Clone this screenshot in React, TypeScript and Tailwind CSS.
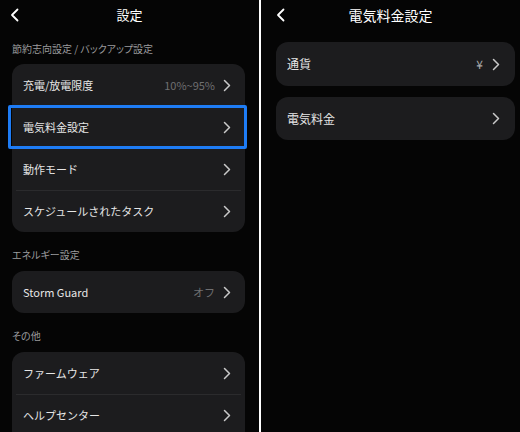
import React from "react";

const font = { fontFamily: '"Noto Sans CJK JP", "Noto Sans", sans-serif' };

function Chevron() {
  return (
    <svg width="8" height="13" viewBox="0 0 8 13" className="shrink-0">
      <polyline points="1.5,1.5 6.5,6.5 1.5,11.5" fill="none" stroke="#c9c9c9" strokeWidth="1.5" strokeLinecap="round" strokeLinejoin="round" />
    </svg>
  );
}

function Back() {
  return (
    <svg width="9" height="14" viewBox="0 0 9 14">
      <polyline points="7.5,1.5 2,7 7.5,12.5" fill="none" stroke="#ffffff" strokeWidth="1.8" strokeLinecap="round" strokeLinejoin="round" />
    </svg>
  );
}

function Row({ label, value, divider, highlight }: { label: string; value?: string; divider?: boolean; highlight?: boolean }) {
  return (
    <div className="relative h-[42px] flex items-center pl-[11px] pr-[14px]">
      {divider && <div className="absolute top-0 left-[4px] right-[4px] h-px bg-[#2b2b2d]" />}
      <span className="flex-1 text-[11px] text-[#e6e6e6]">{label}</span>
      {value && <span className="text-[11px] text-[#6f6f71] mr-[8px]">{value}</span>}
      <Chevron />
      {highlight && (
        <div className="absolute -top-[1px] -bottom-[1px] -left-[4px] -right-[2px] border-[3px] border-[#1e7cf5] rounded-[2px]" />
      )}
    </div>
  );
}

export default function App() {
  return (
    <div className="flex w-[520px] h-[432px] overflow-hidden bg-black" style={font}>
      <div className="w-[259px] h-full bg-[#050505]">
        <div className="relative h-[30px] flex items-center justify-center">
          <div className="absolute left-[10px] top-[8px]"><Back /></div>
          <span className="text-[13px] text-white">設定</span>
        </div>
        <div className="pt-[12px] pb-[8px] pl-[12px] text-[10px] leading-[14px] text-[#9b9b9d] [font-feature-settings:'palt']">節約志向設定 / バックアップ設定</div>
        <div className="ml-[12px] w-[233px] rounded-[12px] bg-[#1c1c1e]">
          <Row label="充電/放電限度" value="10%~95%" />
          <Row label="電気料金設定" highlight />
          <Row label="動作モード" />
          <Row label="スケジュールされたタスク" divider />
        </div>
        <div className="pt-[16px] pb-[9px] pl-[12px] text-[10px] leading-[14px] text-[#9b9b9d] [font-feature-settings:'palt']">エネルギー設定</div>
        <div className="ml-[12px] w-[233px] rounded-[12px] bg-[#1c1c1e]">
          <Row label="Storm Guard" value="オフ" />
        </div>
        <div className="pt-[16px] pb-[9px] pl-[12px] text-[10px] leading-[14px] text-[#9b9b9d] [font-feature-settings:'palt']">その他</div>
        <div className="ml-[12px] w-[233px] rounded-[12px] bg-[#1c1c1e]">
          <Row label="ファームウェア" />
          <Row label="ヘルプセンター" divider />
          <Row label="" divider />
        </div>
      </div>
      <div className="w-[2px] h-full bg-white" />
      <div className="flex-1 h-full bg-[#050505]">
        <div className="relative h-[30px] flex items-center justify-center">
          <div className="absolute left-[15px] top-[8px]"><Back /></div>
          <span className="text-[14px] text-white">電気料金設定</span>
        </div>
        <div className="mt-[12px] ml-[15px] w-[239px] flex flex-col gap-[11px]">
          <div className="h-[44px] rounded-[12px] bg-[#1c1c1e] flex items-center pl-[11px] pr-[15px]">
            <span className="flex-1 text-[12px] text-[#e6e6e6]">通貨</span>
            <span className="text-[12px] text-[#a8a8aa] mr-[9px]">¥</span>
            <Chevron />
          </div>
          <div className="h-[43px] rounded-[12px] bg-[#1c1c1e] flex items-center pl-[11px] pr-[15px]">
            <span className="flex-1 text-[12px] text-[#e6e6e6]">電気料金</span>
            <Chevron />
          </div>
        </div>
      </div>
    </div>
  );
}
